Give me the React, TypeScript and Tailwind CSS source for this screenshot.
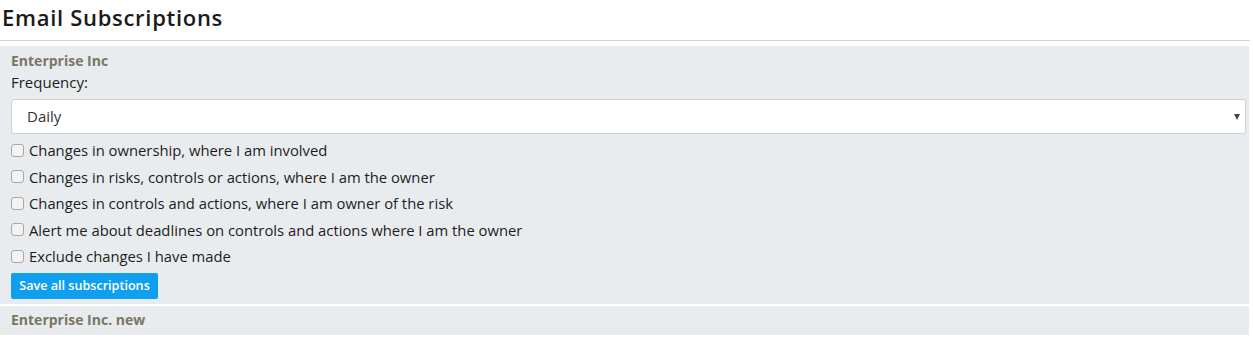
import React from "react";

const items = [
  "Changes in ownership, where I am involved",
  "Changes in risks, controls or actions, where I am the owner",
  "Changes in controls and actions, where I am owner of the risk",
  "Alert me about deadlines on controls and actions where I am the owner",
  "Exclude changes I have made",
];

export default function App() {
  return (
    <div className="w-[1253px] h-[341px] bg-white text-[#1d1d1d] font-['Open_Sans',sans-serif]">
      <div className="pr-[3px]">
        <h1 className="h-[40px] pl-[2px] pt-[3px] text-[22px] leading-[28px] tracking-[0.7px] font-semibold text-[#1a1a1a]">
          Email Subscriptions
        </h1>
        <div className="h-[1px] bg-[#d4d4cc]" />
        <div className="mt-[5px] w-[1249px] bg-[#e9ecef] px-[11px] pt-[5px] pb-[5px]">
          <div className="text-[14px] leading-[20px] font-bold text-[#7b7566]">Enterprise Inc</div>
          <div className="mt-[1px] text-[15px] leading-[20px]">Frequency:</div>
          <div className="relative mt-[7px] h-[35px] w-[1235px] rounded-[3px] border border-[#cfcfd4] bg-white">
            <span className="absolute left-[15px] top-[6px] text-[15px] leading-[20px] text-[#333]">Daily</span>
            <span className="absolute right-[5px] top-[14px] h-0 w-0 border-x-[3.5px] border-t-[6px] border-x-transparent border-t-[#444]" />
          </div>
          <div className="mt-[6px] flex flex-col gap-[6.5px]">
            {items.map((t) => (
              <label key={t} className="flex h-[20px] items-center gap-[5px] text-[14.8px] leading-[20px] text-[#1d1d1d]">
                <span className="h-[13px] w-[13px] shrink-0 rounded-[3px] border border-[#a8a8a8] bg-[#f3f3f3]" />
                <span>{t}</span>
              </label>
            ))}
          </div>
          <button className="mt-[7px] block h-[26px] w-[147px] rounded-[2px] bg-[#0ea0ee] text-[12.6px] font-semibold text-white">
            Save all subscriptions
          </button>
        </div>
        <div className="mt-[2px] h-[29px] w-[1249px] bg-[#e9ecef] px-[11px] pt-[4px]">
          <div className="text-[14px] leading-[20px] font-bold text-[#7b7566]">Enterprise Inc. new</div>
        </div>
      </div>
    </div>
  );
}
